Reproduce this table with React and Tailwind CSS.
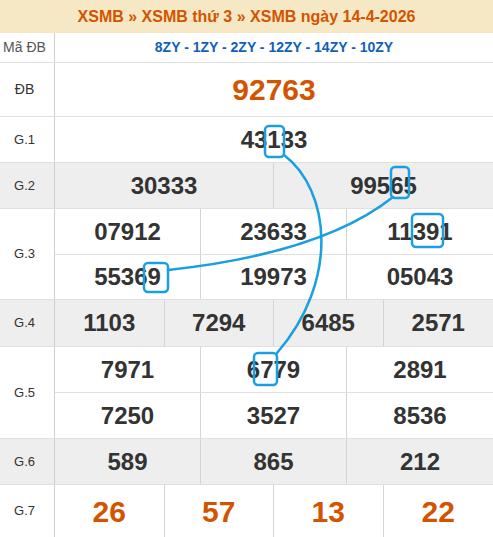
import React from "react";

const font = { fontFamily: '"Liberation Sans", Arial, sans-serif' };

function Label({ children, className = "" }) {
  return (
    <div
      className={
        "w-[55px] shrink-0 border-r border-[#cfcfcf] pr-[5px] flex items-center justify-center text-[13px] text-[#333] " +
        className
      }
    >
      {children}
    </div>
  );
}

function Cells({ items, cols, className = "", big = false }) {
  const grid =
    cols === 1
      ? "grid-cols-1"
      : cols === 2
      ? "grid-cols-2"
      : cols === 3
      ? "grid-cols-3"
      : "grid-cols-4";
  return (
    <div className={"grid flex-1 " + grid + " " + className}>
      {items.map((n, i) => (
        <div
          key={i}
          className={
            "flex items-center justify-center font-bold " +
            (big ? "text-[30px] text-[#d35400] " : "text-[24px] text-[#333] ") +
            (i < items.length - 1 ? "border-r border-[#d4d4d4]" : "")
          }
        >
          {n}
        </div>
      ))}
    </div>
  );
}

export default function App() {
  const blue = "#1a9fe0";
  return (
    <div className="relative w-[493px] h-[537px] overflow-hidden bg-white" style={font}>
      <div className="h-[33px] bg-[#f6e8c4] flex items-center justify-center text-[16px] font-bold text-[#d35400]">
        XSMB » XSMB thứ 3 » XSMB ngày 14-4-2026
      </div>

      <div className="h-[30px] flex border-b border-[#e0e0e0]">
        <Label className="text-[14px] text-[#555]">Mã ĐB</Label>
        <div className="flex-1 flex items-center justify-center text-[14px] font-bold text-[#1160b8]">
          8ZY - 1ZY - 2ZY - 12ZY - 14ZY - 10ZY
        </div>
      </div>

      <div className="h-[54px] flex border-b border-[#e0e0e0]">
        <Label className="text-[14px]">ĐB</Label>
        <Cells items={["92763"]} cols={1} big />
      </div>

      <div className="h-[46px] flex border-b border-[#e0e0e0]">
        <Label>G.1</Label>
        <Cells items={["43133"]} cols={1} />
      </div>

      <div className="h-[46px] flex border-b border-[#e0e0e0] bg-[#eeeeee]">
        <Label>G.2</Label>
        <Cells items={["30333", "99565"]} cols={2} />
      </div>

      <div className="flex border-b border-[#e0e0e0]">
        <Label>G.3</Label>
        <div className="flex-1 flex flex-col">
          <Cells items={["07912", "23633", "11391"]} cols={3} className="h-[46px] flex-none border-b border-[#e0e0e0]" />
          <Cells items={["55369", "19973", "05043"]} cols={3} className="h-[44px] flex-none" />
        </div>
      </div>

      <div className="h-[47px] flex border-b border-[#e0e0e0] bg-[#eeeeee]">
        <Label>G.4</Label>
        <Cells items={["1103", "7294", "6485", "2571"]} cols={4} />
      </div>

      <div className="flex border-b border-[#e0e0e0]">
        <Label>G.5</Label>
        <div className="flex-1 flex flex-col">
          <Cells items={["7971", "6779", "2891"]} cols={3} className="h-[46px] flex-none border-b border-[#e0e0e0]" />
          <Cells items={["7250", "3527", "8536"]} cols={3} className="h-[45px] flex-none" />
        </div>
      </div>

      <div className="h-[46px] flex border-b border-[#e0e0e0] bg-[#eeeeee]">
        <Label>G.6</Label>
        <Cells items={["589", "865", "212"]} cols={3} />
      </div>

      <div className="h-[52px] flex">
        <Label>G.7</Label>
        <Cells items={["26", "57", "13", "22"]} cols={4} big />
      </div>

      <svg
        className="absolute left-0 top-0 pointer-events-none"
        width="493"
        height="537"
        viewBox="0 0 493 537"
        fill="none"
      >
        <g stroke={blue} strokeWidth="2.5" fill="none" strokeLinecap="round">
          <path d="M284 155 C330 190, 340 280, 277 353" />
          <path d="M393 197 Q323 253 168 270" />
          <rect x="265" y="126" width="19" height="31" rx="4" />
          <rect x="391" y="167" width="18" height="31" rx="4" />
          <rect x="412" y="214" width="31" height="33" rx="4" />
          <rect x="144" y="263" width="24" height="29" rx="4" />
          <rect x="254" y="353" width="23" height="32" rx="4" />
        </g>
      </svg>
    </div>
  );
}
